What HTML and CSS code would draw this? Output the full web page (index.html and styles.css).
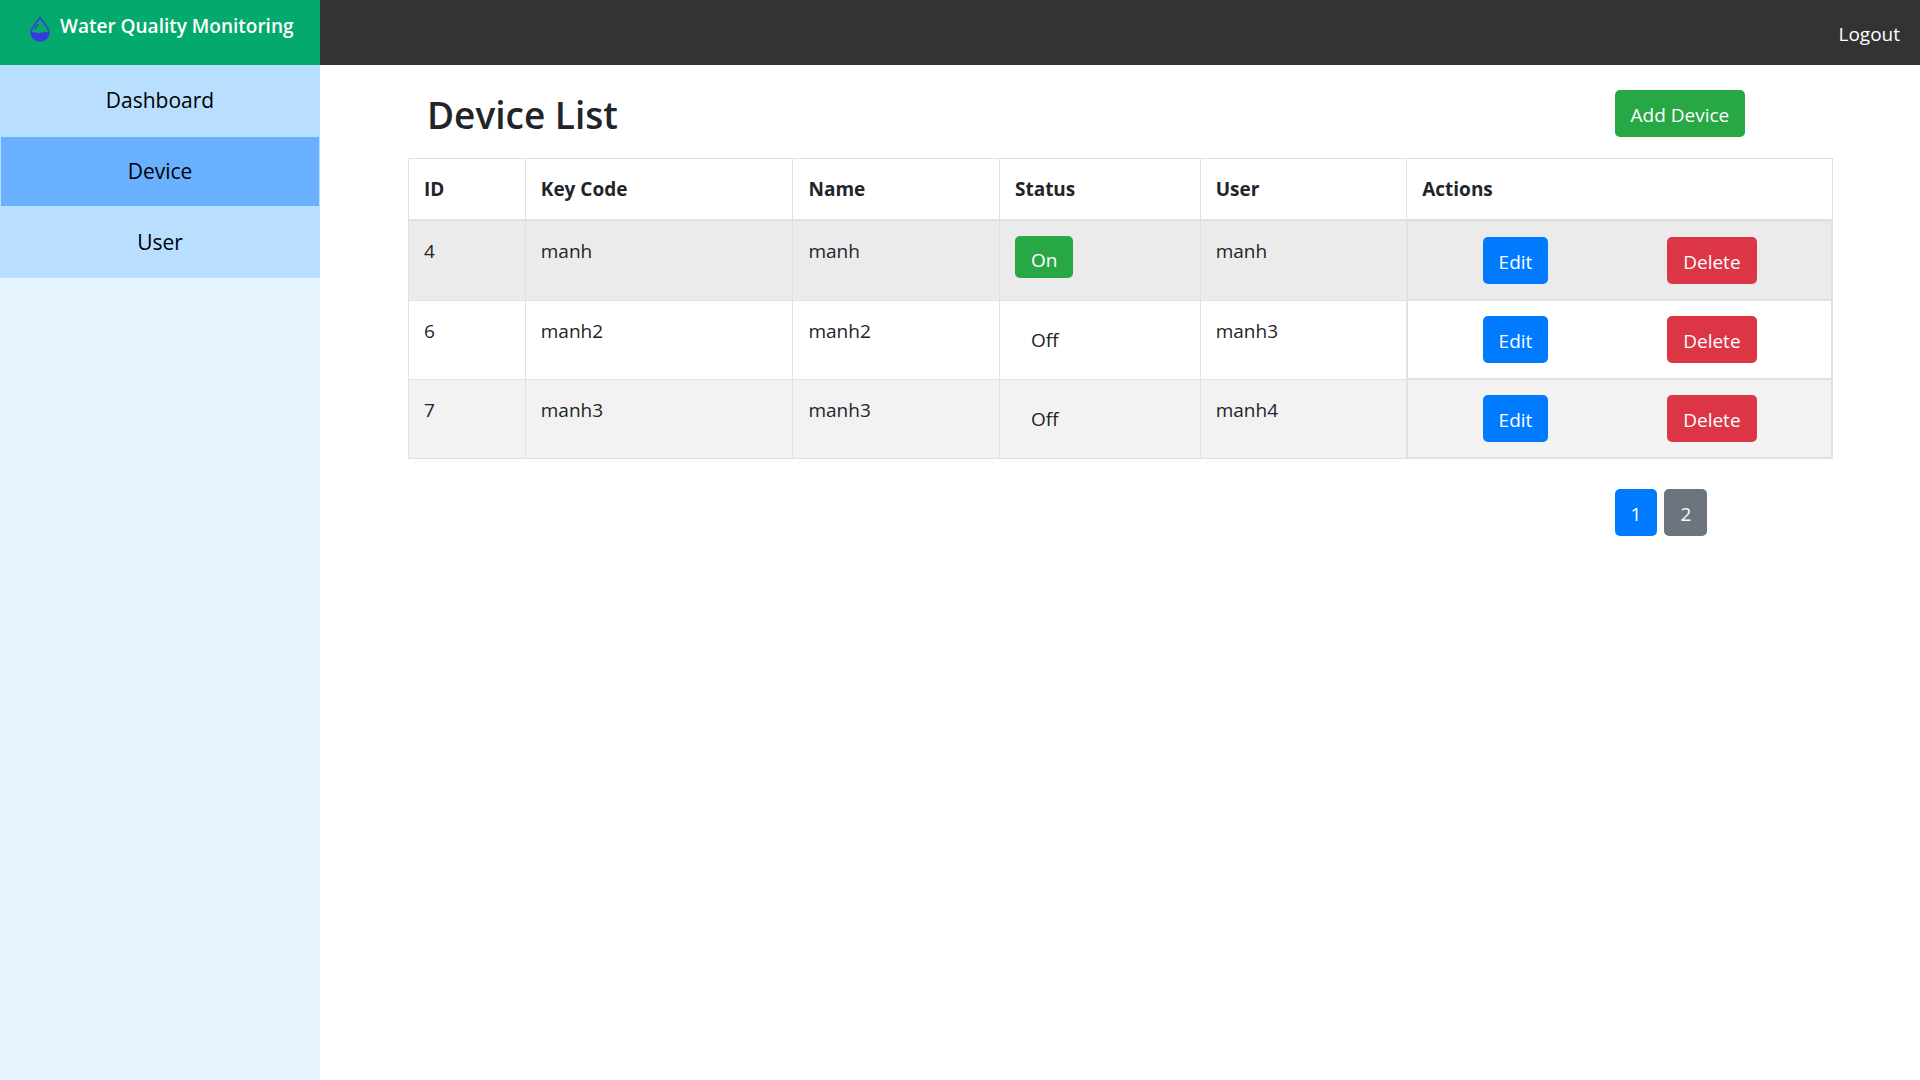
FILE: index.html
```html
<!DOCTYPE html>
<html lang="en">
<head>
  <meta charset="utf-8">
  <meta name="viewport" content="width=device-width, initial-scale=1">
  <title>Water Quality Monitoring</title>
  <link rel="stylesheet" href="styles.css">
</head>
<body>
  <div class="layout">
    <aside class="sidebar">
      <div class="brand">
        <svg class="brand-icon" viewBox="0 0 20 26" aria-hidden="true">
          <path d="M10 1.5C8 5.500 1 11 1 16.500a9 8.500 0 0 0 18 0C19 11 12 5.500 10 1.500Z" fill="none" stroke="#3939e0" stroke-width="1.500"/>
          <path d="M1 16.500C5 15.500 7 17.800 11 16.800S16 15.500 19 16.500a9 8.500 0 0 1-18 0Z" fill="#3939e0"/>
          <path d="M8.500 8C7 9.500 5.500 11 5 13" fill="none" stroke="#3939e0" stroke-width="1.500"/>
        </svg>
        <span>Water Quality Monitoring</span>
      </div>
      <nav class="menu">
        <a class="menu-item" href="#">Dashboard</a>
        <a class="menu-item active" href="#">Device</a>
        <a class="menu-item" href="#">User</a>
      </nav>
    </aside>
    <div class="page">
      <header class="topbar"><a class="logout" href="#">Logout</a></header>
      <main class="content">
        <div class="row">
          <h2 class="title">Device List</h2>
          <div class="col"><button type="button" class="btn success">Add Device</button></div>
        </div>
        <table class="devices">
          <colgroup>
            <col class="c-id"><col class="c-key"><col class="c-name"><col class="c-status"><col class="c-user"><col>
          </colgroup>
          <thead>
            <tr><th>ID</th><th>Key Code</th><th>Name</th><th>Status</th><th>User</th><th>Actions</th></tr>
          </thead>
          <tbody>
            <tr class="hovered">
              <td>4</td><td>manh</td><td>manh</td>
              <td><span class="status on">On</span></td>
              <td>manh</td>
              <td class="actions-cell"><div class="actions"><button type="button" class="btn primary">Edit</button><button type="button" class="btn danger">Delete</button></div></td>
            </tr>
            <tr>
              <td>6</td><td>manh2</td><td>manh2</td>
              <td><span class="status">Off</span></td>
              <td>manh3</td>
              <td class="actions-cell"><div class="actions"><button type="button" class="btn primary">Edit</button><button type="button" class="btn danger">Delete</button></div></td>
            </tr>
            <tr>
              <td>7</td><td>manh3</td><td>manh3</td>
              <td><span class="status">Off</span></td>
              <td>manh4</td>
              <td class="actions-cell"><div class="actions"><button type="button" class="btn primary">Edit</button><button type="button" class="btn danger">Delete</button></div></td>
            </tr>
          </tbody>
        </table>
        <div class="row">
          <div class="col pages">
            <button type="button" class="btn primary">1</button>
            <button type="button" class="btn secondary">2</button>
          </div>
        </div>
      </main>
    </div>
  </div>
</body>
</html>
```
FILE: styles.css
```css
*, *::before, *::after { box-sizing: border-box; }

body {
  margin: 0;
  background: #fff;
  color: #212529;
  font-family: "Segoe UI", "Open Sans", "Noto Sans", sans-serif;
  font-size: 19px;
  line-height: 30px;
}

a { color: inherit; text-decoration: none; }

.layout {
  display: grid;
  grid-template-columns: minmax(0, 1fr) minmax(0, 5fr);
  min-height: 100vh;
}

.sidebar { background: #e5f3ff; }

.brand {
  display: flex;
  gap: 10px;
  height: 65px;
  padding: 11px 0 0 30px;
  background: #04aa6d;
  color: #fff;
  font-weight: 600;
  white-space: nowrap;
}

.brand-icon {
  flex: none;
  width: 20px;
  height: 26px;
  margin-top: 5px;
}

.menu { background: #b8dfff; }

.menu-item {
  display: block;
  padding: 19px 20px 20px;
  border: 1px solid #b8dfff;
  color: #000;
  font-size: 21px;
  line-height: 30px;
  text-align: center;
}

.menu-item.active { background: #69b0ff; }

.topbar {
  display: flex;
  align-items: center;
  justify-content: flex-end;
  height: 65px;
  padding: 2px 20px 0;
  background: #333;
  color: #fff;
}

.content { padding: 25px 87px 25px 88px; }

.row {
  display: grid;
  grid-template-columns: 5fr 1fr;
}

.title {
  margin: 0;
  padding: 0 19px;
  font-size: 37px;
  font-weight: 600;
  line-height: 50px;
}

.col { padding: 0 19px; }

.pages {
  display: flex;
  grid-column: 2;
  gap: 7px;
}

.btn {
  height: 47px;
  padding: 3px 16px 0;
  border: 0;
  border-radius: 5px;
  color: #fff;
  font: inherit;
}

.success { background: #28a745; }
.primary { background: #007bff; }
.danger { background: #dc3545; }
.secondary { background: #6c757d; }

.devices {
  width: 100%;
  margin: 18px 0 30px;
  border-collapse: collapse;
  table-layout: fixed;
}

.c-id { width: 8.2%; }
.c-key { width: 18.8%; }
.c-name { width: 14.5%; }
.c-status { width: 14.1%; }
.c-user { width: 14.5%; }

.devices th,
.devices td {
  padding: 15px;
  border: 1px solid #dee2e6;
  text-align: left;
  vertical-align: top;
}

.devices th {
  border-bottom-width: 2px;
  font-weight: 700;
}

.devices tbody tr:nth-child(odd) { background: #f2f2f2; }
.devices tbody tr.hovered { background: #ebebeb; }

.devices .actions-cell { padding: 0; }

.actions {
  display: flex;
  justify-content: space-around;
  padding: 15px;
  border: 1px solid #dee2e6;
  border-top-width: 0;
}

tr:first-child .actions { border-top-width: 1px; }

.status {
  display: inline-block;
  height: 42px;
  padding: 9px 16px 3px;
  border-radius: 5px;
  vertical-align: top;
}

.status.on { background: #28a745; color: #fff; }
```
